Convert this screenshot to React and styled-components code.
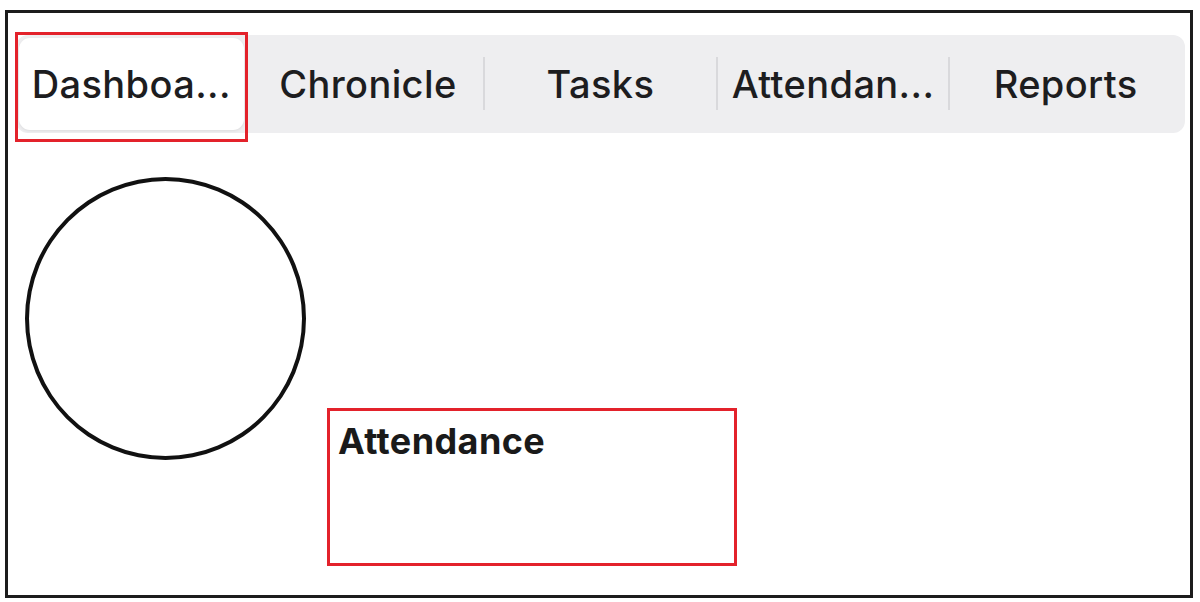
import React from 'react';
import styled, { createGlobalStyle } from 'styled-components';

const tabs = ['Dashboa...', 'Chronicle', 'Tasks', 'Attendan...', 'Reports'];
const active = 0;

const GlobalStyle = createGlobalStyle`
  html, body {
    margin: 0;
    padding: 0;
    background: #fff;
  }
  body {
    font-family: Inter, "Liberation Sans", Arial, sans-serif;
    color: #1d1d1f;
  }
`;

const Frame = styled.div`
  box-sizing: border-box;
  margin: 10px 0 0 5px;
  width: 1188px;
  height: 588px;
  border: 3px solid #1c1c1c;
  padding: 22px 5px 0 8px;
  display: flex;
  flex-direction: column;
  gap: 44px;
`;

const TabBar = styled.div`
  display: flex;
  align-items: stretch;
  height: 98px;
  box-sizing: border-box;
  padding: 3px;
  background: #eeeef0;
  border-radius: 12px;
`;

const Segment = styled.div`
  position: relative;
  flex: 1;
  display: flex;

  &::before {
    content: '';
    display: ${(p) => (p.$sep ? 'block' : 'none')};
    position: absolute;
    left: -1px;
    top: 19px;
    bottom: 20px;
    width: 2px;
    background: #d9d9dc;
  }
`;

const Pill = styled.div`
  flex: 1;
  display: flex;
  align-items: center;
  justify-content: center;
  margin-right: ${(p) => (p.$active ? '8px' : '0')};
  font-size: 38px;
  font-weight: 500;
  letter-spacing: 0.4px;
  white-space: nowrap;
  border-radius: 11px;
  background: ${(p) => (p.$active ? '#fff' : 'transparent')};
  box-shadow: ${(p) => (p.$active ? '0 1px 3px rgba(0,0,0,0.08)' : 'none')};
`;

const Highlight = styled.span`
  position: absolute;
  top: -6px;
  left: -4px;
  right: 4px;
  bottom: -12px;
  border: 3px solid #e3222b;
  pointer-events: none;
`;

const Content = styled.div`
  display: flex;
  align-items: flex-start;
  gap: 21px;
  padding-left: 9px;
`;

const Avatar = styled.div`
  box-sizing: border-box;
  width: 281px;
  height: 283px;
  border-radius: 50%;
  border: 4px solid #111;
  flex-shrink: 0;
`;

const Card = styled.div`
  box-sizing: border-box;
  margin-top: 231px;
  width: 410px;
  height: 158px;
  border: 3px solid #e3222b;
  padding: 9px 8px;
`;

const CardTitle = styled.div`
  font-size: 36px;
  font-weight: 700;
  letter-spacing: 0.4px;
  line-height: 1.2;
  color: #1a1a1a;
`;

export default function App() {
  return (
    <>
      <GlobalStyle />
      <Frame>
        <TabBar>
          {tabs.map((t, i) => (
            <Segment key={t} $sep={i > 0 && i !== active && i !== active + 1}>
              <Pill $active={i === active}>{t}</Pill>
              {i === active && <Highlight />}
            </Segment>
          ))}
        </TabBar>
        <Content>
          <Avatar />
          <Card>
            <CardTitle>Attendance</CardTitle>
          </Card>
        </Content>
      </Frame>
    </>
  );
}
